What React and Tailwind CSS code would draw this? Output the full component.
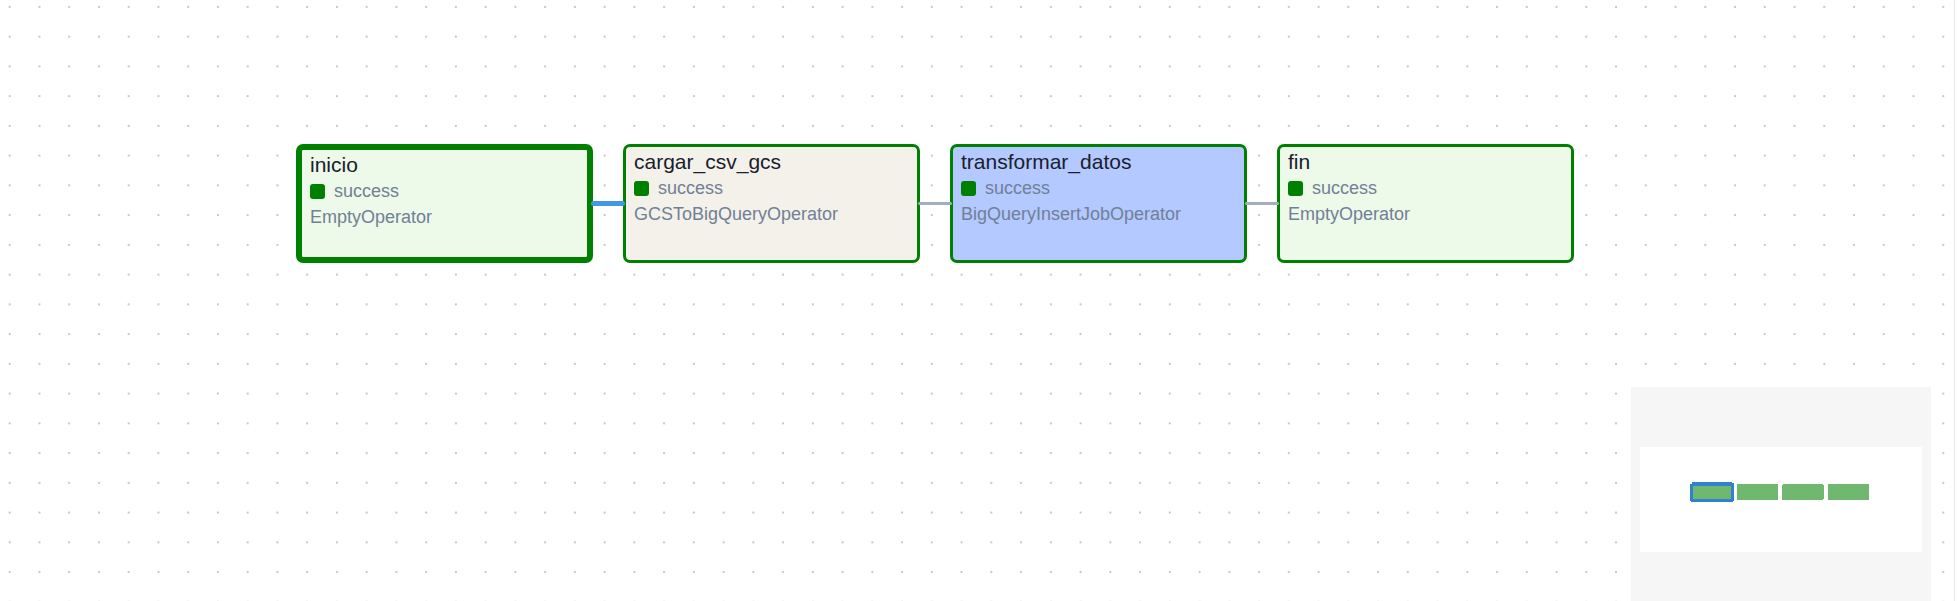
const tasks = [
  { id: "inicio", operator: "EmptyOperator", color: "bg-[#edf9e9]", selected: true },
  { id: "cargar_csv_gcs", operator: "GCSToBigQueryOperator", color: "bg-[#f4f1ea]" },
  { id: "transformar_datos", operator: "BigQueryInsertJobOperator", color: "bg-[#b3c9ff]" },
  { id: "fin", operator: "EmptyOperator", color: "bg-[#edf9e9]" },
];

function DotGrid() {
  return (
    <svg className="absolute inset-0 h-full w-full" aria-hidden="true">
      <pattern id="dots" x="8.7" y="5.9" width="29.747" height="29.747" patternUnits="userSpaceOnUse">
        <circle cx="1" cy="1" r="0.8" fill="#81818a" />
      </pattern>
      <rect width="100%" height="100%" fill="url(#dots)" />
    </svg>
  );
}

function TaskNode({ task }) {
  return (
    <article
      className={`h-[119px] w-[297px] shrink-0 rounded-[7px] border-[#008000] px-2 pt-[2px] ${
        task.selected ? "border-[6px]" : "border-[3px]"
      } ${task.color}`}
    >
      <h2 className="text-[21px] leading-[26px] text-[#1a202c]">{task.id}</h2>
      <div className="flex items-center gap-[9px] text-[18px] leading-[26px] text-[#718096]">
        <span className="size-[15px] rounded-[3px] bg-[#008000]" />
        <span>success</span>
      </div>
      <p className="text-[18px] leading-[26px] text-[#718096]">{task.operator}</p>
    </article>
  );
}

function Edge({ active }) {
  return (
    <span
      className={`z-10 -mx-[2px] w-[34px] shrink-0 rounded-full ${
        active ? "h-[5px] bg-[#4299e1]" : "h-[3px] bg-[#a0aec0]"
      }`}
    />
  );
}

function MiniMap() {
  return (
    <svg
      className="absolute right-[23px] -bottom-[11px] h-[225px] w-[300px]"
      viewBox="0 0 300 225"
      role="img"
      aria-label="Mini map"
    >
      <rect width="300" height="225" fill="#f6f6f6" />
      <rect x="9" y="60" width="282" height="105" fill="#fff" />
      <g fill="#70b770" shapeRendering="crispEdges">
        <rect x="62" y="99" width="38" height="13" />
        <path d="M61 95h40v1h2v18h-1v1H60v-1h-1V97h2zM62 99v13h38V99z" fill="#3182ce" fillRule="evenodd" />
        <rect x="106" y="97" width="41" height="16" />
        <path d="M152 97h40v1h1v14h-1v1h-41V98h1z" />
        <rect x="197" y="97" width="41" height="16" />
      </g>
    </svg>
  );
}

export default function App() {
  return (
    <div className="h-screen overflow-hidden bg-white pr-[4px] font-['Liberation_Sans',Arial,sans-serif]">
      <main className="relative h-full overflow-hidden border-r border-[#e2e8f0]">
        <DotGrid />
        <div className="relative flex items-center pt-36 pl-[296px]">
          {tasks.map((task, i) => (
            <div key={task.id} className="flex shrink-0 items-center">
              {i > 0 && <Edge active={i === 1} />}
              <TaskNode task={task} />
            </div>
          ))}
        </div>
        <MiniMap />
      </main>
    </div>
  );
}
